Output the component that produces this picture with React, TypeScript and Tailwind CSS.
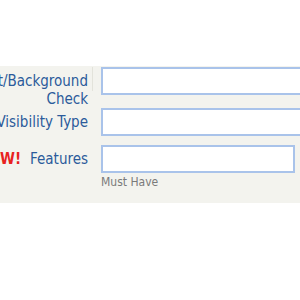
import React from 'react';

const labelCls = "text-[15px] leading-[18px] text-[#2b5b9b] whitespace-nowrap text-right";
const inputCls = "h-[28px] border-2 border-[#a9c3ea] bg-white shrink-0 outline-none";

const App: React.FC = () => {
  return (
    <div
      className="w-[300px] h-[300px] bg-white overflow-hidden"
      style={{ fontFamily: '"DejaVu Sans Condensed", "DejaVu Sans", sans-serif' }}
    >
      <div className="mt-[66px] bg-[#f3f3ee] pt-px pb-[13px]">
        {/* background check */}
        <div className="flex items-start">
          <div className="w-[88px] shrink-0 flex justify-end pt-[5px]">
            <div className={labelCls}>
              Credit/Background
              <br />
              Check
            </div>
          </div>
          <div className="ml-[4px] w-px h-[24px] bg-[#e3e3db] shrink-0" />
          <input className={`${inputCls} ml-[8px] w-[220px]`} />
        </div>

        {/* visibility */}
        <div className="flex items-center">
          <div className="w-[88px] shrink-0 flex justify-end">
            <div className={labelCls}>Listing Visibility Type</div>
          </div>
          <input className={`${inputCls} ml-[13px] w-[220px]`} />
        </div>

        {/* features */}
        <div className="flex items-center mt-[9px]">
          <div className="w-[88px] shrink-0 flex justify-end">
            <div className={labelCls}>
              <span className="font-bold text-[#e8221e] mr-[9px]">NEW!</span>
              Features
            </div>
          </div>
          <input className={`${inputCls} ml-[13px] w-[194px]`} />
        </div>
        <div className="ml-[101px] mt-px text-[12px] leading-[16px] text-[#7a7a7a]">Must Have</div>
      </div>
    </div>
  );
};

export default App;
